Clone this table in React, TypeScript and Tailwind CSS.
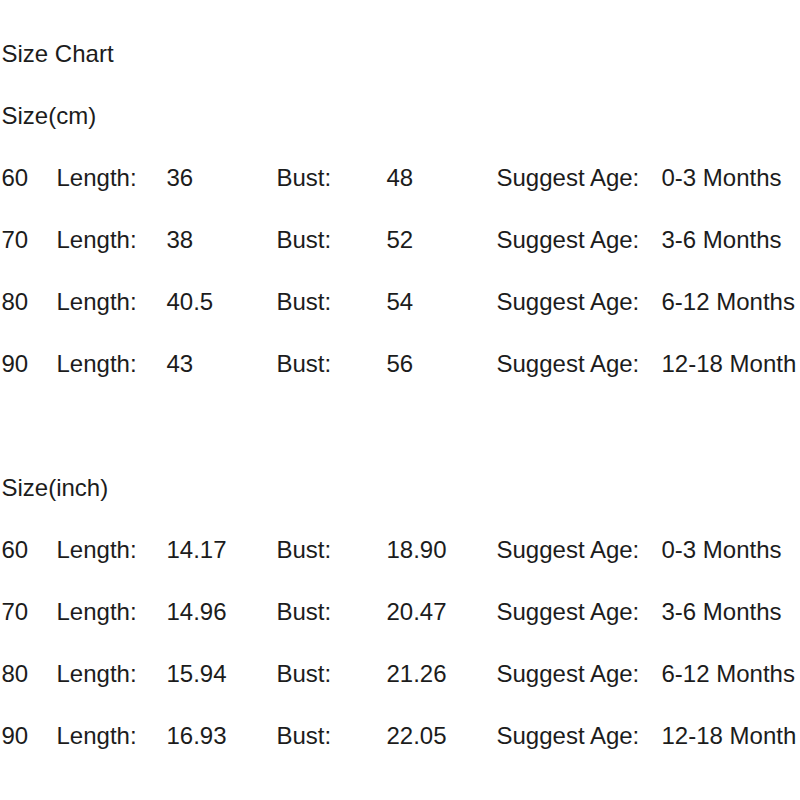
import React from "react";

type Row = [string, string, string, string];

const cm: Row[] = [
  ["60", "36", "48", "0-3 Months"],
  ["70", "38", "52", "3-6 Months"],
  ["80", "40.5", "54", "6-12 Months"],
  ["90", "43", "56", "12-18 Month"],
];

const inch: Row[] = [
  ["60", "14.17", "18.90", "0-3 Months"],
  ["70", "14.96", "20.47", "3-6 Months"],
  ["80", "15.94", "21.26", "6-12 Months"],
  ["90", "16.93", "22.05", "12-18 Month"],
];

function DataRow({ r }: { r: Row }) {
  return (
    <div className="grid grid-cols-[55px_110px_110px_110px_110px_165px_1fr] h-[62px] whitespace-nowrap">
      <div>{r[0]}</div>
      <div>Length:</div>
      <div>{r[1]}</div>
      <div>Bust:</div>
      <div>{r[2]}</div>
      <div>Suggest Age:</div>
      <div>{r[3]}</div>
    </div>
  );
}

export default function App() {
  return (
    <div
      className="w-[800px] h-[800px] overflow-hidden bg-white text-[#1c1c1c] text-[24px] leading-[62px] pt-[23px] pl-[1.5px]"
      style={{ fontFamily: '"Liberation Sans", Arial, sans-serif' }}
    >
      <div className="h-[62px]">Size Chart</div>
      <div className="h-[62px]">Size(cm)</div>
      {cm.map((r) => (
        <DataRow key={"cm" + r[0]} r={r} />
      ))}
      <div className="h-[62px]" />
      <div className="h-[62px]">Size(inch)</div>
      {inch.map((r) => (
        <DataRow key={"in" + r[0]} r={r} />
      ))}
    </div>
  );
}
